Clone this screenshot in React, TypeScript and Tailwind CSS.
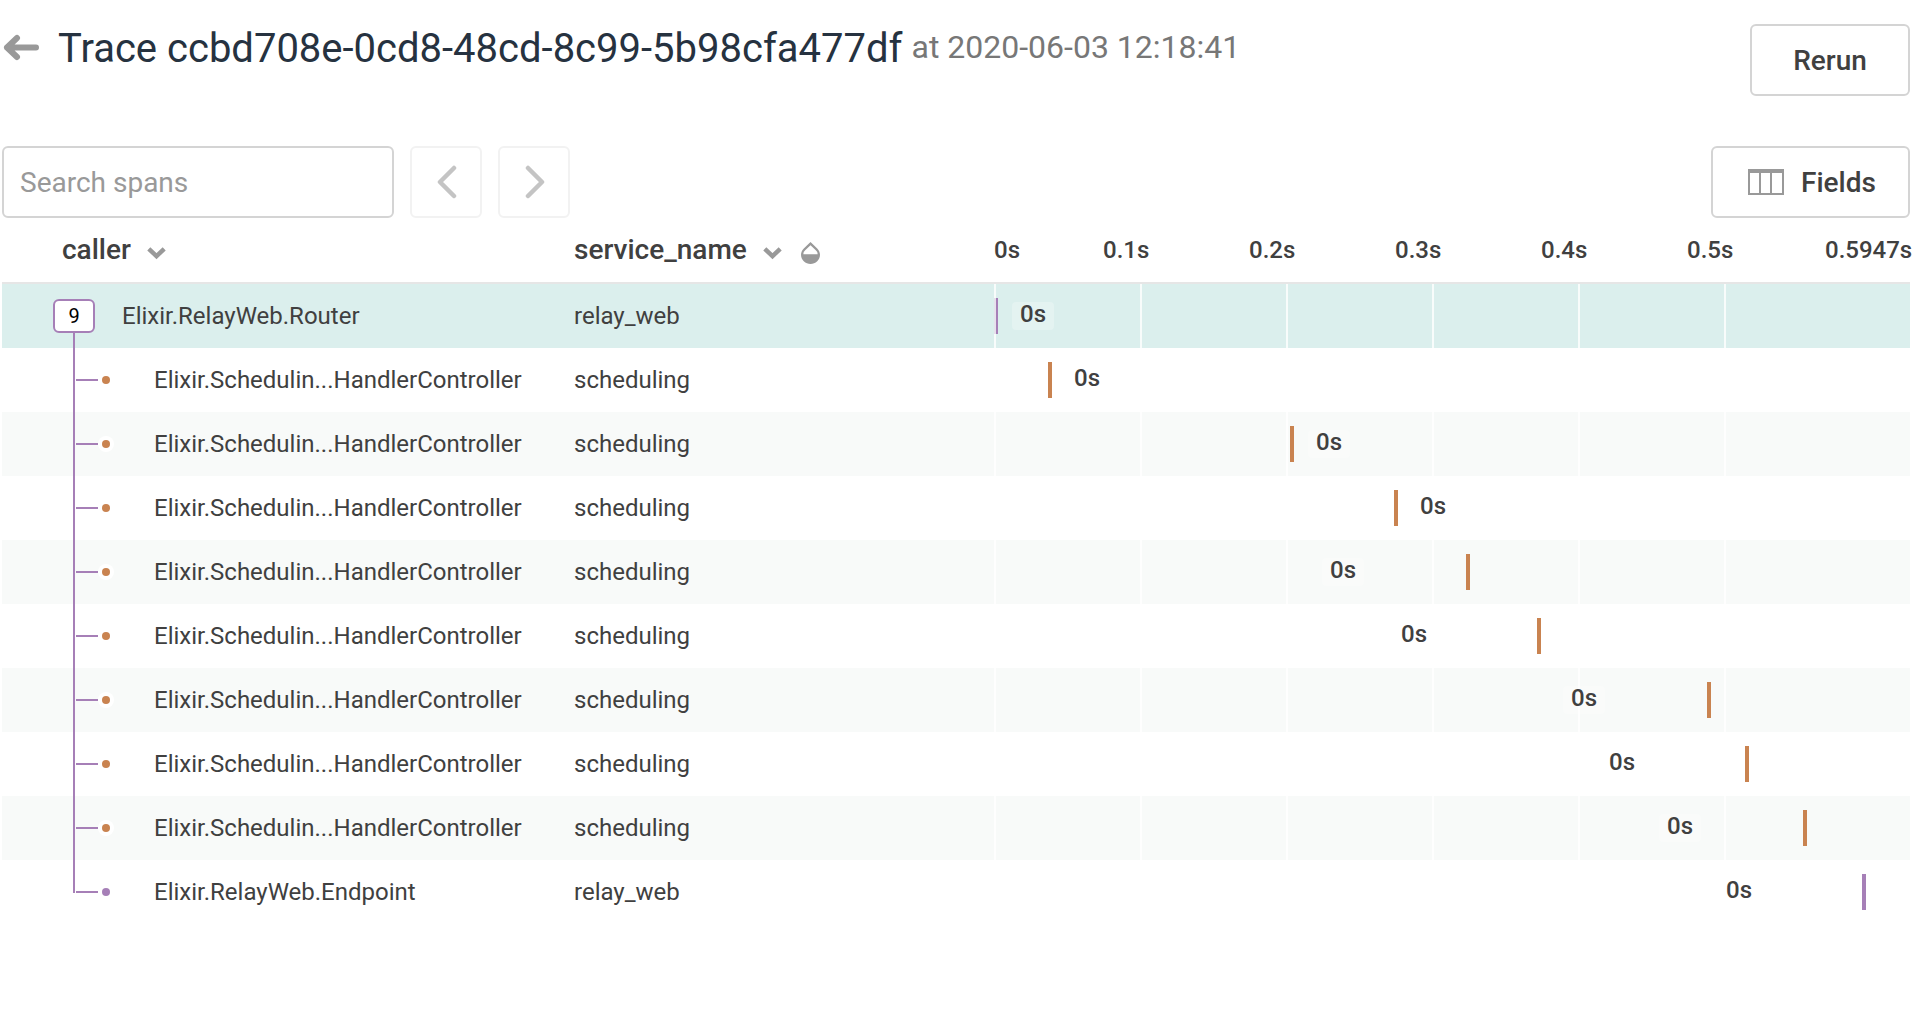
import { useState } from "react";

const TICKS = ["0s", "0.1s", "0.2s", "0.3s", "0.4s", "0.5s"];

type Span = {
  caller: string;
  service: string;
  left: number;
  side: "left" | "right";
};

const HANDLER = "Elixir.Schedulin...HandlerController";

const SPANS: Span[] = [
  { caller: "Elixir.RelayWeb.Router", service: "relay_web", left: 0, side: "right" },
  { caller: HANDLER, service: "scheduling", left: 54, side: "right" },
  { caller: HANDLER, service: "scheduling", left: 296, side: "right" },
  { caller: HANDLER, service: "scheduling", left: 400, side: "right" },
  { caller: HANDLER, service: "scheduling", left: 472, side: "left" },
  { caller: HANDLER, service: "scheduling", left: 543, side: "left" },
  { caller: HANDLER, service: "scheduling", left: 713, side: "left" },
  { caller: HANDLER, service: "scheduling", left: 751, side: "left" },
  { caller: HANDLER, service: "scheduling", left: 809, side: "left" },
  { caller: "Elixir.RelayWeb.Endpoint", service: "relay_web", left: 868, side: "left" },
];

function Chevron() {
  return (
    <svg className="mt-2" width="19" height="13" viewBox="0 0 19 13" fill="none" stroke="#999" strokeWidth="4.4">
      <path d="M1.8 1.8L9.5 9.2L17.2 1.8" />
    </svg>
  );
}

function Drop() {
  return (
    <svg className="mt-2" width="19" height="22" viewBox="4 2.3 16 19.4" preserveAspectRatio="none" fill="#999">
      <path d="M17.66 8L12 2.35 6.34 8C4.78 9.56 4 11.64 4 13.64s.78 4.11 2.34 5.67 3.61 2.35 5.66 2.35 4.1-.79 5.66-2.35S20 15.64 20 13.64 19.22 9.56 17.66 8zM6 13c.01-1.6.62-2.5 1.76-3.6L12 5.27l4.24 4.13C17.38 10.5 17.99 11.4 18 13H6z" />
    </svg>
  );
}

function Tree({ index }: { index: number }) {
  if (index === 0) {
    return (
      <div className="flex h-16 items-center pl-[51px]">
        <button className="relative z-10 h-[34px] w-[42px] rounded-md border-2 border-[#a67fb7] bg-white text-xl leading-none text-black">
          9
        </button>
      </div>
    );
  }
  const last = index === SPANS.length - 1;
  return (
    <div className="relative flex h-16 items-center pl-[71px]">
      <div className={last ? "absolute top-[-16px] h-[49px] w-[2px] bg-[#a67fb7]" : "absolute top-[-16px] h-20 w-[2px] bg-[#a67fb7]"} />
      <div className="ml-[3px] h-[2px] w-[22px] bg-[#a67fb7]" />
      <div className="flex size-4 items-center justify-center rounded-full bg-white">
        <div className={last ? "size-2 rounded-full bg-[#a67fb7]" : "size-2 rounded-full bg-[#c98350]"} />
      </div>
    </div>
  );
}

function Timeline({ span, index }: { span: Span; index: number }) {
  const purple = index === 0 || index === SPANS.length - 1;
  return (
    <div className="relative h-16">
      <div className="absolute inset-0 flex">
        {TICKS.map((t) => (
          <div key={t} className="w-[146px] shrink-0 border-l-2 border-white/80" />
        ))}
      </div>
      <div
        className={purple ? "absolute top-[14px] h-9 w-1 bg-[#a67fb7]" : "absolute top-[14px] h-9 w-1 bg-[#c98350]"}
        style={{ left: span.left }}
      />
      {index === 0 && <div className="absolute left-0 top-[14px] h-9 w-[2px] bg-[#e6e2ec]" />}
      <div
        className="absolute top-[18px] h-7 w-[42px] rounded bg-white/25 text-center text-2xl leading-6 font-medium"
        style={{ left: span.side === "right" ? span.left + 18 : span.left - 144 }}
      >
        0s
      </div>
    </div>
  );
}

export default function App() {
  const [query, setQuery] = useState("");
  return (
    <main className="pr-5 pl-[2px] font-['Roboto',sans-serif] text-[#404040]">
      <header className="flex items-start justify-between pt-6">
        <div className="flex h-12 items-start">
          <a href="#" aria-label="Back" className="block w-[56px] self-center">
            <svg width="38" height="28" viewBox="0 0 38 28" fill="none" stroke="#999" strokeWidth="6" strokeLinecap="round" strokeLinejoin="round">
              <path d="M15 4L5 13.500L15 23M5 13.500H34" />
            </svg>
          </a>
          <h1 className="flex items-start text-[40px] leading-[50px] whitespace-pre text-[#263240]">
            Trace ccbd708e-0cd8-48cd-8c99-5b98cfa477df
            <span className="pl-[9px] text-[32px] leading-[46px] text-[#777]">at 2020-06-03 12:18:41</span>
          </h1>
        </div>
        <button className="h-[72px] w-[160px] rounded-md border-2 border-[#d4d4d4] pt-[2px] text-[28px] leading-8 font-medium">Rerun</button>
      </header>

      <div className="mt-[50px] flex gap-4">
        <input
          aria-label="Search spans"
          placeholder="Search spans"
          value={query}
          onChange={(e) => setQuery(e.target.value)}
          className="h-[72px] w-[392px] rounded-md border-2 border-[#d4d4d4] px-4 text-[28px] placeholder:text-[#999]"
        />
        <button aria-label="Previous" className="flex size-[72px] items-center justify-center rounded-md border-2 border-[#f2f2f2] pl-[2px]">
          <svg width="20" height="34" viewBox="0 0 20 34" fill="none" stroke="#c4c4c4" strokeWidth="4.5" strokeLinecap="round" strokeLinejoin="round">
            <path d="M17 3L3 17L17 31" />
          </svg>
        </button>
        <button aria-label="Next" className="flex size-[72px] items-center justify-center rounded-md border-2 border-[#f2f2f2] pl-[2px]">
          <svg width="20" height="34" viewBox="0 0 20 34" fill="none" stroke="#c4c4c4" strokeWidth="4.5" strokeLinecap="round" strokeLinejoin="round">
            <path d="M3 3L17 17L3 31" />
          </svg>
        </button>
        <button className="ml-auto flex h-[72px] w-[199px] items-center gap-[17px] rounded-md border-2 border-[#d4d4d4] pl-[35px] text-[28px] font-medium">
          <svg width="36" height="26" viewBox="0 0 36 26" fill="#999" shapeRendering="crispEdges">
            <path fillRule="evenodd" d="M0 0H36V26H0ZM2 4V24H11V4ZM13 4V24H22V4ZM24 4V24H34V4Z" />
          </svg>
          <span className="pt-[2px]">Fields</span>
        </button>
      </div>

      <table className="w-full table-fixed border-collapse text-left text-2xl">
        <colgroup>
          <col className="w-[572px]" />
          <col className="w-[420px]" />
          <col />
        </colgroup>
        <thead>
          <tr className="h-[65px] border-b-2 border-[#e6e6e6]">
            <th className="p-0 pb-px pl-[60px] text-[28px] font-medium">
              <button className="flex items-center gap-4">caller <Chevron /></button>
            </th>
            <th className="p-0 pb-px text-[28px] font-medium">
              <div className="flex items-center gap-[19px]">
                <button className="flex items-center gap-4">service_name <Chevron /></button>
                <Drop />
              </div>
            </th>
            <th className="p-0 pb-px font-medium">
              <div className="flex whitespace-nowrap">
                <span className="w-[109px] shrink-0">0s</span>
                {TICKS.slice(1).map((t) => (
                  <span key={t} className="w-[146px] shrink-0">{t}</span>
                ))}
                <span className="-ml-2">0.5947s</span>
              </div>
            </th>
          </tr>
        </thead>
        <tbody>
          {SPANS.map((span, i) => (
            <tr key={i} className={i === 0 ? "bg-[#dbefed]" : i % 2 === 0 ? "bg-[#f8faf9]" : ""}>
              <td className="p-0">
                <div className="flex items-center">
                  <div className={i === 0 ? "w-[120px]" : "w-[152px]"}>
                    <Tree index={i} />
                  </div>
                  {span.caller}
                </div>
              </td>
              <td className="p-0">{span.service}</td>
              <td className="p-0">
                <Timeline span={span} index={i} />
              </td>
            </tr>
          ))}
        </tbody>
      </table>
    </main>
  );
}
